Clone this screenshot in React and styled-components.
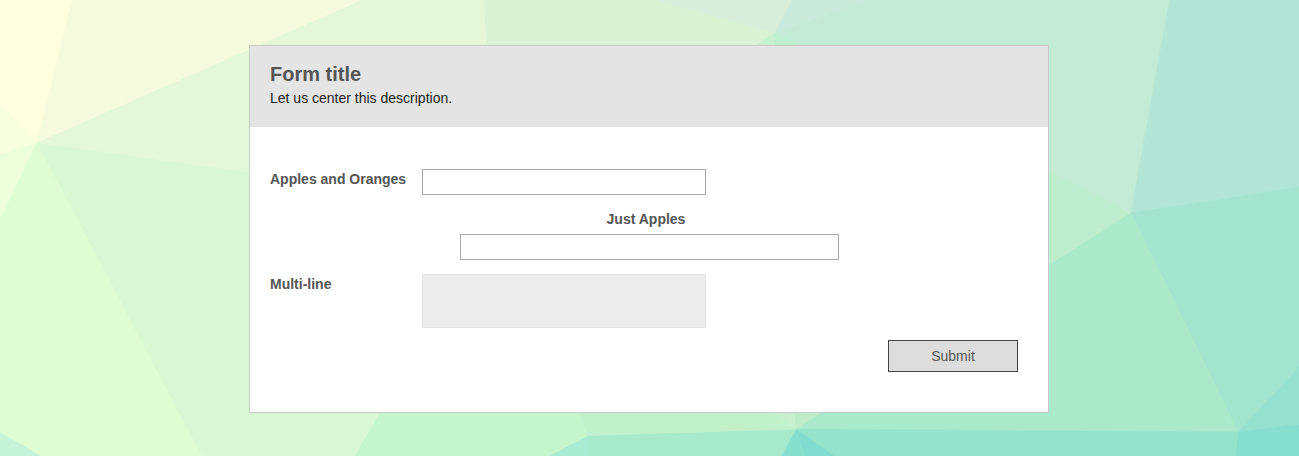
import React from "react";
import styled, { createGlobalStyle } from "styled-components";

const GlobalStyle = createGlobalStyle`
  *, *::before, *::after { box-sizing: border-box; }
  body { margin: 0; overflow: hidden; }
  body, input, textarea, button { font-family: "Liberation Sans", Arial, sans-serif; font-size: 14px; }
`;

const Page = styled.main`
  position: relative;
  display: flex;
  justify-content: center;
  align-items: flex-start;
  height: 456px;
  padding: 45px 250px 0 249px;
  background: #d7f8d2;
`;

const Backdrop = styled.svg`
  position: absolute;
  inset: 0;
  width: 1299px;
  height: 456px;
`;

const Card = styled.form`
  position: relative;
  width: 800px;
  height: 368px;
  background: #fff;
  border: 1px solid #c9c9c9;
`;

const Header = styled.header`
  height: 81px;
  padding: 16px 20px 0;
  background: #e4e4e4;
`;

const Title = styled.h1`
  margin: 0;
  font-size: 20px;
  line-height: 24px;
  color: #555;
`;

const Description = styled.p`
  margin: 4px 0 0;
  line-height: 16px;
  color: #222;
`;

const Fields = styled.div`
  display: flex;
  flex-direction: column;
  padding: 42px 30px 0 20px;
`;

const Field = styled.div`
  display: flex;
  flex-direction: ${(p) => (p.$stacked ? "column" : "row")};
  align-items: ${(p) => (p.$stacked ? "center" : "flex-start")};
  width: ${(p) => (p.$stacked ? "759px" : "auto")};
  margin-bottom: ${(p) => p.$gap}px;
`;

const Label = styled.label`
  width: ${(p) => (p.$stacked ? "auto" : "152px")};
  padding-top: ${(p) => (p.$stacked ? 0 : 2)}px;
  margin: ${(p) => (p.$stacked ? "0 7px 7px 0" : "0")};
  font-weight: bold;
  line-height: 16px;
  color: #555;
  white-space: nowrap;
`;

const Input = styled.input`
  width: ${(p) => p.$width}px;
  height: 26px;
  padding: 0 5px;
  border: 1px solid #a9a9a9;
  border-radius: 0;
  background: #fff;
  outline: none;
`;

const TextArea = styled.textarea`
  display: block;
  width: 284px;
  height: 54px;
  border: 1px solid #e3e3e3;
  border-radius: 0;
  background: #ededed;
  resize: none;
  outline: none;
`;

const Submit = styled.button`
  align-self: flex-end;
  width: 130px;
  height: 32px;
  padding: 0;
  border: 1px solid #444;
  border-radius: 0;
  background: #ddd;
  color: #555;
`;

const facets = [
  ["#ffffe0", "0,0 72.5,0 37,143 0,104"],
  ["#f7ffdd", "0,104 37,143 0,155"],
  ["#edffda", "0,155 37,143 0,220"],
  ["#defdd3", "0,220 37,143 201.5,456 41,456 0,432.5"],
  ["#c6f3d8", "0,432.5 41,456 0,456"],
  ["#f5fadd", "72.5,0 363,0 37,143"],
  ["#e4f7d6", "37,143 363,0 484,0 487.5,50 487.5,205"],
  ["#d9f2d3", "484,0 655,0 775,33 748,50 487.5,50"],
  ["#d9eeda", "655,0 792,0 775,33"],
  ["#c9eadb", "792,0 870,0 775,33"],
  ["#c3ead5", "870,0 1169.5,0 1131,213 775,33"],
  ["#c8f0cf", "775,33 775,60 733,60"],
  ["#bdeecd", "775,33 829,60 775,60"],
  ["#beedcd", "1040,167 1131,213 1040,271"],
  ["#b2e5d6", "1169.5,0 1299,0 1299,187 1131,213"],
  ["#a2e4ce", "1131,213 1299,187 1299,367 1238,432"],
  ["#aae9ca", "1131,213 1238,432 796,429 822,412 1040,271"],
  ["#96e0d0", "1238,432 1299,367 1299,424.5"],
  ["#87ddce", "1238,432 1299,424.5 1299,456 1235,456"],
  ["#93e4cb", "796,429 1238,432 1235,456 834,456"],
  ["#82dbcf", "796,429 834,456 804,456"],
  ["#87decd", "796,429 804,456 781,456"],
  ["#a7eacb", "588,435.5 796,429 781,456 588,456"],
  ["#a9ebd3", "588,435.5 588,456 549,456"],
  ["#c5f5cb", "381,412 578,412 588,435.5 549,456 355,456"],
  ["#c1f0ca", "578,412 773,412 796,429 588,435.5"],
  ["#c8efd0", "773,412 795,412 796,429"],
  ["#beebc9", "795,412 822,412 796,429"],
];

export default function App() {
  return (
    <>
      <GlobalStyle />
      <Page>
        <Backdrop viewBox="0 0 1299 456" aria-hidden="true">
          {facets.map(([color, points]) => (
            <polygon key={points} points={points} fill={color} stroke={color} strokeWidth="0.5" />
          ))}
        </Backdrop>
        <Card onSubmit={(e) => e.preventDefault()}>
          <Header>
            <Title>Form title</Title>
            <Description>Let us center this description.</Description>
          </Header>
          <Fields>
            <Field $gap={16}>
              <Label htmlFor="both">Apples and Oranges</Label>
              <Input id="both" $width={284} />
            </Field>
            <Field $stacked $gap={14}>
              <Label $stacked htmlFor="apples">Just Apples</Label>
              <Input id="apples" $width={379} />
            </Field>
            <Field $gap={12}>
              <Label htmlFor="multi">Multi-line</Label>
              <TextArea id="multi" />
            </Field>
            <Submit type="submit">Submit</Submit>
          </Fields>
        </Card>
      </Page>
    </>
  );
}
